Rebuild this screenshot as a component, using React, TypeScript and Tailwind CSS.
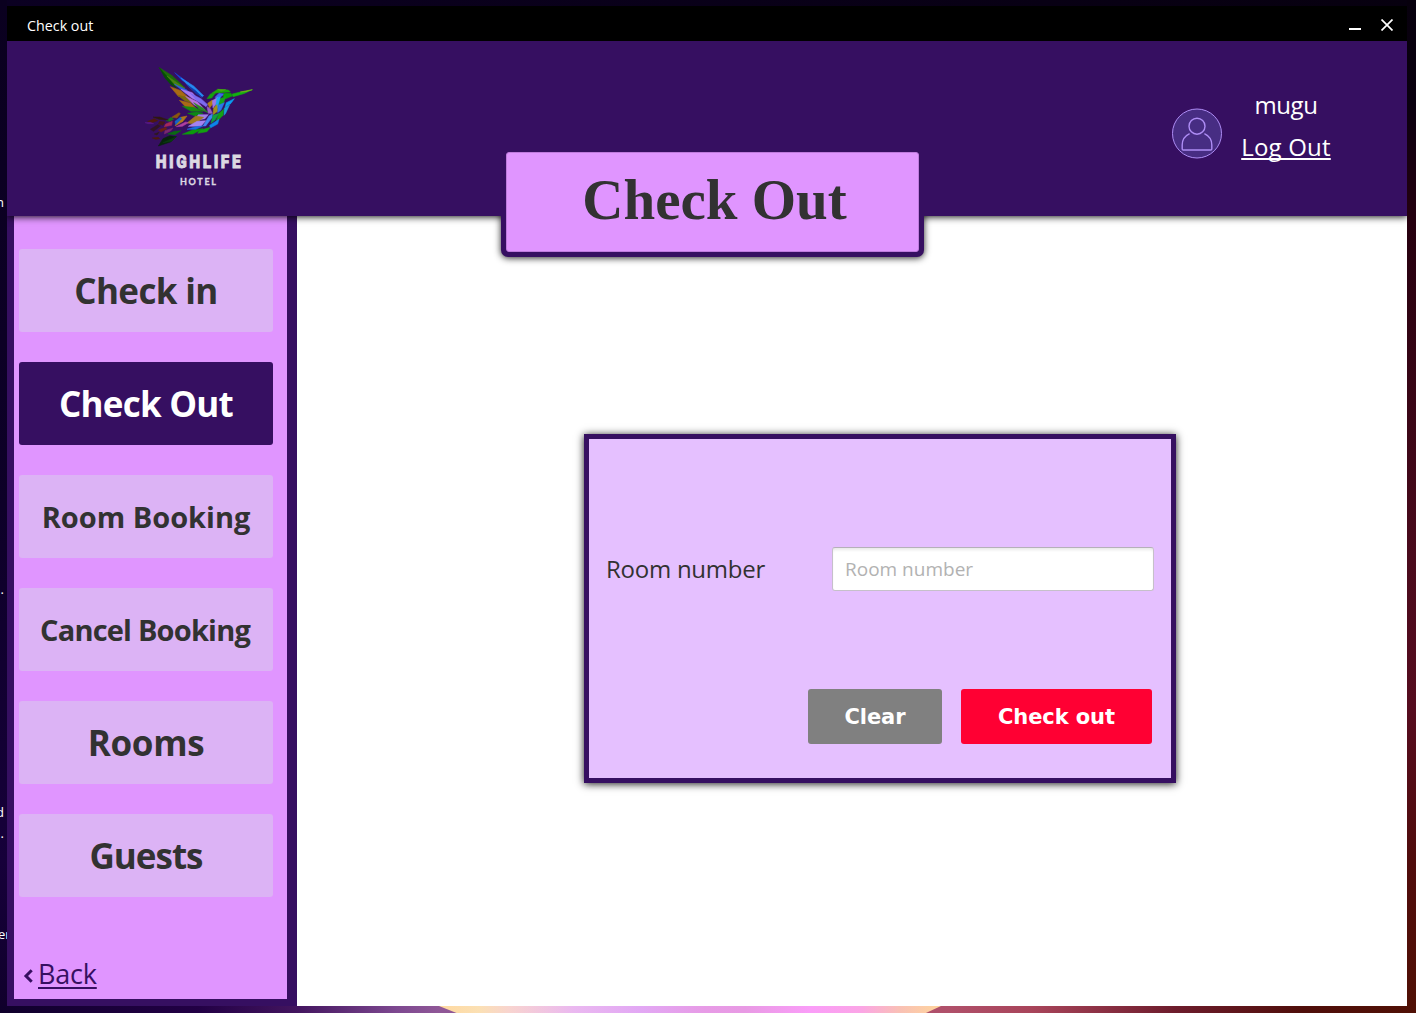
import React from "react";

type NavItem = { label: string; text: string; active?: boolean };

const navItems: NavItem[] = [
  { label: "Check in", text: "text-[35px] tracking-[-0.65px]" },
  { label: "Check Out", text: "text-[35px] tracking-[-0.75px]", active: true },
  { label: "Room Booking", text: "text-[29px]" },
  { label: "Cancel Booking", text: "text-[29px] tracking-[-0.8px] pr-[2px]" },
  { label: "Rooms", text: "text-[35px] tracking-[-0.3px]" },
  { label: "Guests", text: "text-[35px] tracking-[-1px]" },
];

const feathers: [string, string][] = [
  // upper wing
  ["47,15 84,38 110,62 124,77 92,68 68,48", "#1d6b0a"],
  ["47,15 64,46 82,66 98,76 74,46", "#064d06"],
  ["70,40 94,56 124,77 98,70", "#4c8212"],
  ["93,30 112,44 136,62 116,54", "#1746d8"],
  ["112,46 150,70 180,99 174,103 140,76", "#2489f0"],
  ["130,66 156,84 176,104 156,92", "#1238a8"],
  ["92,64 126,80 154,102 126,92", "#2b62d8"],
  ["112,80 146,90 172,120 144,106", "#a878f0"],
  ["140,92 172,108 192,126 187,132 160,114", "#7d6af0"],
  ["80,72 112,84 136,106 104,101", "#a86a14"],
  ["102,98 136,104 156,124 124,115", "#7a6a10"],
  ["126,101 162,118 184,142 152,127", "#b874e0"],
  ["150,120 178,136 194,150 166,139", "#2a8a20"],
  ["107,113 142,122 158,138 126,133", "#a86a16"],
  ["116,131 150,134 178,146 142,146", "#178a10"],
  // head and beak
  ["190,108 200,94 216,90 204,106", "#14a010"],
  ["204,92 222,80 254,82 260,88 226,90", "#18a808"],
  ["222,80 246,81 232,86", "#4ca418"],
  ["214,104 226,92 242,94 224,108", "#3a68e8"],
  ["242,92 262,92 266,100 246,108 238,100", "#0aa008"],
  ["266,94 290,88 326,81 300,93 268,102", "#12b010"],
  ["290,88 326,81 306,87", "#78b018"],
  ["248,120 272,108 262,122 244,134", "#0a9cf0"],
  ["242,136 258,126 246,152 241,158", "#18a0d8"],
  ["228,108 246,102 240,120 226,130", "#15a51a"],
  // breast
  ["192,122 206,112 210,120 198,136", "#b08018"],
  ["206,114 222,104 222,118 208,136", "#a078e8"],
  ["220,106 230,102 222,136 214,144", "#18a8f0"],
  ["210,136 220,126 222,146 208,156", "#a49018"],
  ["224,128 242,120 232,142 222,150", "#2a7ae8"],
  ["190,132 200,138 206,152 194,152", "#9a60c8"],
  ["226,152 240,140 238,158 216,180", "#14a214"],
  // body
  ["132,152 160,148 178,152 154,160", "#0c8a14"],
  ["164,156 194,156 184,168 150,174", "#a080e8"],
  ["196,160 206,154 206,164 186,190 178,190", "#3f86f0"],
  ["208,158 226,152 214,172 202,182", "#10a040"],
  ["198,188 226,170 222,184 200,196", "#0c86e8"],
  ["168,203 200,194 190,207 162,212", "#12a010"],
  ["130,181 156,160 180,164 154,184", "#a07820"],
  ["134,191 160,176 186,174 172,191", "#a582f0"],
  ["116,215 146,202 178,198 148,214", "#0c9a0c"],
  ["130,200 156,192 178,190 156,200", "#1472e0"],
  // tail
  ["84,164 106,150 110,153 100,166", "#8a580c"],
  ["110,164 130,160 118,176 94,190", "#b07818"],
  ["94,176 110,164 114,168 96,186", "#1464c8"],
  ["66,184 86,176 84,188 62,192", "#a4285a"],
  ["68,174 82,164 90,170 78,176", "#147820"],
  ["98,192 126,178 134,180 116,191", "#b040a0"],
  ["28,163 48,163 74,172 46,170", "#30180f"],
  ["12,176 32,168 42,174 24,180", "#501a0c"],
  ["4,180 20,179 30,183 14,183", "#5a1888"],
  ["48,176 64,178 58,188 44,184", "#441818"],
  ["20,200 42,186 50,190 30,206", "#301424"],
  ["44,202 66,194 70,198 52,208", "#6a2014"],
  ["72,214 92,206 112,204 94,216", "#0a6a12"],
  ["64,204 88,196 82,204 62,214", "#7a2870"],
  ["26,226 44,224 48,228 36,230", "#4a1a0c"],
  ["32,214 46,209 40,217", "#301818"],
  ["44,250 58,228 78,219 98,222 80,238", "#06240c"],
  ["58,240 98,222 84,236", "#0a3c10"],
];

function Logo() {
  return (
    <svg viewBox="0 0 420 420" className="ml-[123px] mt-[14px] h-[140px] w-[140px] shrink-0">
      <g transform="translate(41 23)" strokeWidth="1.6">
        {feathers.map(([points, fill]) => (
          <polygon key={points} points={points} fill={fill} stroke={fill} />
        ))}
      </g>
      <text
        transform="translate(77 340) scale(0.84 1)"
        fontFamily="Roboto, sans-serif"
        fontWeight="900"
        fontSize="55"
        textLength="303"
        fill="#dcd8e2"
        stroke="#dcd8e2"
        strokeWidth="2.500"
      >
        HIGHLIFE
      </text>
      <text
        x="150"
        y="391"
        fontFamily="Lato, sans-serif"
        fontWeight="700"
        fontSize="27"
        textLength="108"
        fill="#dcd8e2"
        stroke="#dcd8e2"
        strokeWidth="1"
      >
        HOTEL
      </text>
    </svg>
  );
}

function Avatar() {
  return (
    <svg viewBox="0 0 50 50" className="h-[51px] w-[50px]" fill="none" stroke="#ae8df5">
      <circle cx="25" cy="25" r="24.5" fill="#472d83" strokeWidth="1" />
      <circle cx="25" cy="17.7" r="8" strokeWidth="1.4" />
      <path
        d="M17.6 25.2C12.8 27.5 10.2 31.5 10.2 36.5V40.5Q10.2 41.5 11.2 41.5H38.8Q39.8 41.5 39.8 40.5V36.5C39.8 31.5 37.2 27.5 32.4 25.2"
        strokeWidth="1.4"
      />
    </svg>
  );
}

function TitleBar() {
  return (
    <div className="flex h-[35px] shrink-0 items-center justify-between bg-black pl-5 pr-[14px] text-white">
      <span className="pt-[5px] text-[14.3px] leading-5">Check out</span>
      <div className="flex items-center gap-5 pt-[3px]">
        <svg viewBox="0 0 12 12" className="h-3 w-3">
          <rect y="9" width="12" height="2" fill="#fff" />
        </svg>
        <svg viewBox="0 0 12 12" className="h-3 w-3" stroke="#fff" strokeWidth="1.7">
          <path d="M.5 .5 11.5 11.5M11.5 .5 .5 11.5" />
        </svg>
      </div>
    </div>
  );
}

function Header() {
  return (
    <header className="relative z-10 flex h-[175px] shrink-0 justify-between bg-[#360f61] shadow-[0_1px_7px_rgba(0,0,0,0.9)]">
      <Logo />
      <div className="mr-[76px] mt-[43px] flex items-start gap-[19px] text-white">
        <div className="mt-[24px]">
          <Avatar />
        </div>
        <div className="flex w-[90px] flex-col items-center text-[24px] leading-[42px]">
          <span className="tracking-[-0.4px]">mugu</span>
          <a className="whitespace-nowrap tracking-[0.2px] underline decoration-2 underline-offset-[2px] [text-decoration-skip-ink:none]">Log Out</a>
        </div>
      </div>
      <div className="absolute left-[494px] top-[106px] h-[110px] w-[423px] rounded-[7px] bg-[#360f61] shadow-[0_1px_7px_rgba(0,0,0,0.85)] [clip-path:inset(69px_-12px_-12px_-12px)]" />
      <div className="absolute left-[499px] top-[111px] h-[100px] w-[413px]">
        <h1 className="flex h-full items-center justify-center rounded-[3px] border border-[#bf7bdd] bg-[#e095ff] pb-[5px] pl-[4px] font-['Liberation_Serif',serif] text-[57px] font-bold leading-none text-[#323232]">
          Check Out
        </h1>
      </div>
    </header>
  );
}

function Sidebar() {
  return (
    <nav className="flex w-[290px] shrink-0 flex-col border-b-[7px] border-l-[7px] border-r-[10px] border-[#360f61] bg-[#e095ff] pl-[5px] pr-[14px] pt-[33px]">
      <div className="flex flex-col gap-[30px]">
        {navItems.map((item) => (
          <button
            key={item.label}
            className={`flex h-[83px] w-[254px] items-center justify-center whitespace-nowrap rounded-[3px] font-bold leading-none ${item.text} ${
              item.active ? "bg-[#360f61] text-white" : "bg-[#dcb3f5] text-[#323232]"
            }`}
          >
            {item.label}
          </button>
        ))}
      </div>
      <a className="mt-[57px] flex items-center pl-[4px] text-[#360f61]">
        <svg viewBox="0 0 10 14" className="mr-[5px] mt-[3px] h-[14px] w-[10px]" fill="none" stroke="#360f61" strokeWidth="3">
          <path d="M8.7 1.3 3 7l5.700 5.700" />
        </svg>
        <span className="text-[27px] leading-[40px] tracking-[-0.2px] underline decoration-[1.500px] underline-offset-[3px]">Back</span>
      </a>
    </nav>
  );
}

function CheckOutForm() {
  return (
    <form className="ml-[287px] mt-[218px] flex h-[349px] w-[592px] flex-col border-[5px] border-[#360f61] bg-[#e5c0ff] pl-[17px] pr-[17px] pt-[108px] shadow-[0_1px_8px_rgba(0,0,0,0.9)]">
      <div className="flex h-[44px] items-center justify-between">
        <label className="pb-[1px] text-[24px] leading-none tracking-[-0.25px] text-[#323232]">Room number</label>
        <div className="flex h-[44px] w-[322px] items-center rounded-[3px] border border-[#c6c0ca] border-t-[#b5b0b9] bg-white pl-[12px] pt-[1px] text-[19px] leading-none text-[#b2b2b2] shadow-[inset_0_3px_3px_-1px_rgba(0,0,0,0.09)]">
          Room number
        </div>
      </div>
      <div className="mt-[98px] flex justify-end gap-[19px] pr-[2px] font-['DejaVu_Sans',sans-serif] text-[21px] font-bold tracking-[-0.1px] text-white">
        <button type="button" className="h-[55px] w-[134px] rounded-[3px] bg-[#808080] pt-[3px]">Clear</button>
        <button type="button" className="h-[55px] w-[191px] rounded-[3px] bg-[#ff0033] pt-[3px]">Check out</button>
      </div>
    </form>
  );
}

function Desktop() {
  return (
    <div className="absolute inset-0 overflow-hidden bg-[linear-gradient(90deg,#0b0022,#07000f)] text-[13px] leading-none text-white">
      <div className="absolute inset-y-0 left-0 w-[7px] bg-[linear-gradient(180deg,#0a001f,#0d0028_50%,#16003a_85%,#10002b)]" />
      <div className="absolute inset-y-0 right-0 w-[9px] bg-[linear-gradient(180deg,#07000d,#0a000f_10%,#26000f_22%,#4a0a1c_55%,#560c1f_70%,#500c0c_85%,#501005)]" />
      <div className="absolute bottom-0 left-0 h-[7px] w-full bg-[linear-gradient(90deg,#0f002b,#220045_14%,#43155f_21%,#7d4890_28%,#8f5797_31%,#b0506a_67%,#a8445a_73%,#6d1c2c_83%,#4f0e0a_92%,#501005)]" />
      {/* glow rising behind the lower window edge */}
      <div className="absolute bottom-0 left-[439px] h-[7px] w-[502px] bg-[linear-gradient(90deg,#ffd9a0,#fbe0b4_8%,#f8d4cf_14%,#eab8f0_27%,#e2a8f4_40%,#e79be6_53%,#e89ae4_61%,#fa9df8_74%,#fba5e6_84%,#f9c1b4_92%,#ffd59c)] [clip-path:polygon(0_0,100%_0,97%_100%,3.500%_100%)]" />
      <span className="absolute -left-[4px] top-[196px]">n</span>
      <span className="absolute -left-[3px] top-[583px]">..</span>
      <span className="absolute -left-[4px] top-[806px]">d</span>
      <span className="absolute -left-[3px] top-[827px]">..</span>
      <span className="absolute -left-[2px] top-[928px]">er</span>
    </div>
  );
}

export default function App() {
  return (
    <div className="relative h-[1013px] w-[1416px] overflow-hidden pl-[7px] pt-[6px] font-['Open_Sans','Noto_Sans',sans-serif]">
      <Desktop />
      <div className="relative flex h-[1000px] w-[1400px] flex-col overflow-hidden bg-white">
        <TitleBar />
        <Header />
        <div className="flex flex-1">
          <Sidebar />
          <main className="flex-1 bg-white">
            <CheckOutForm />
          </main>
        </div>
      </div>
    </div>
  );
}
